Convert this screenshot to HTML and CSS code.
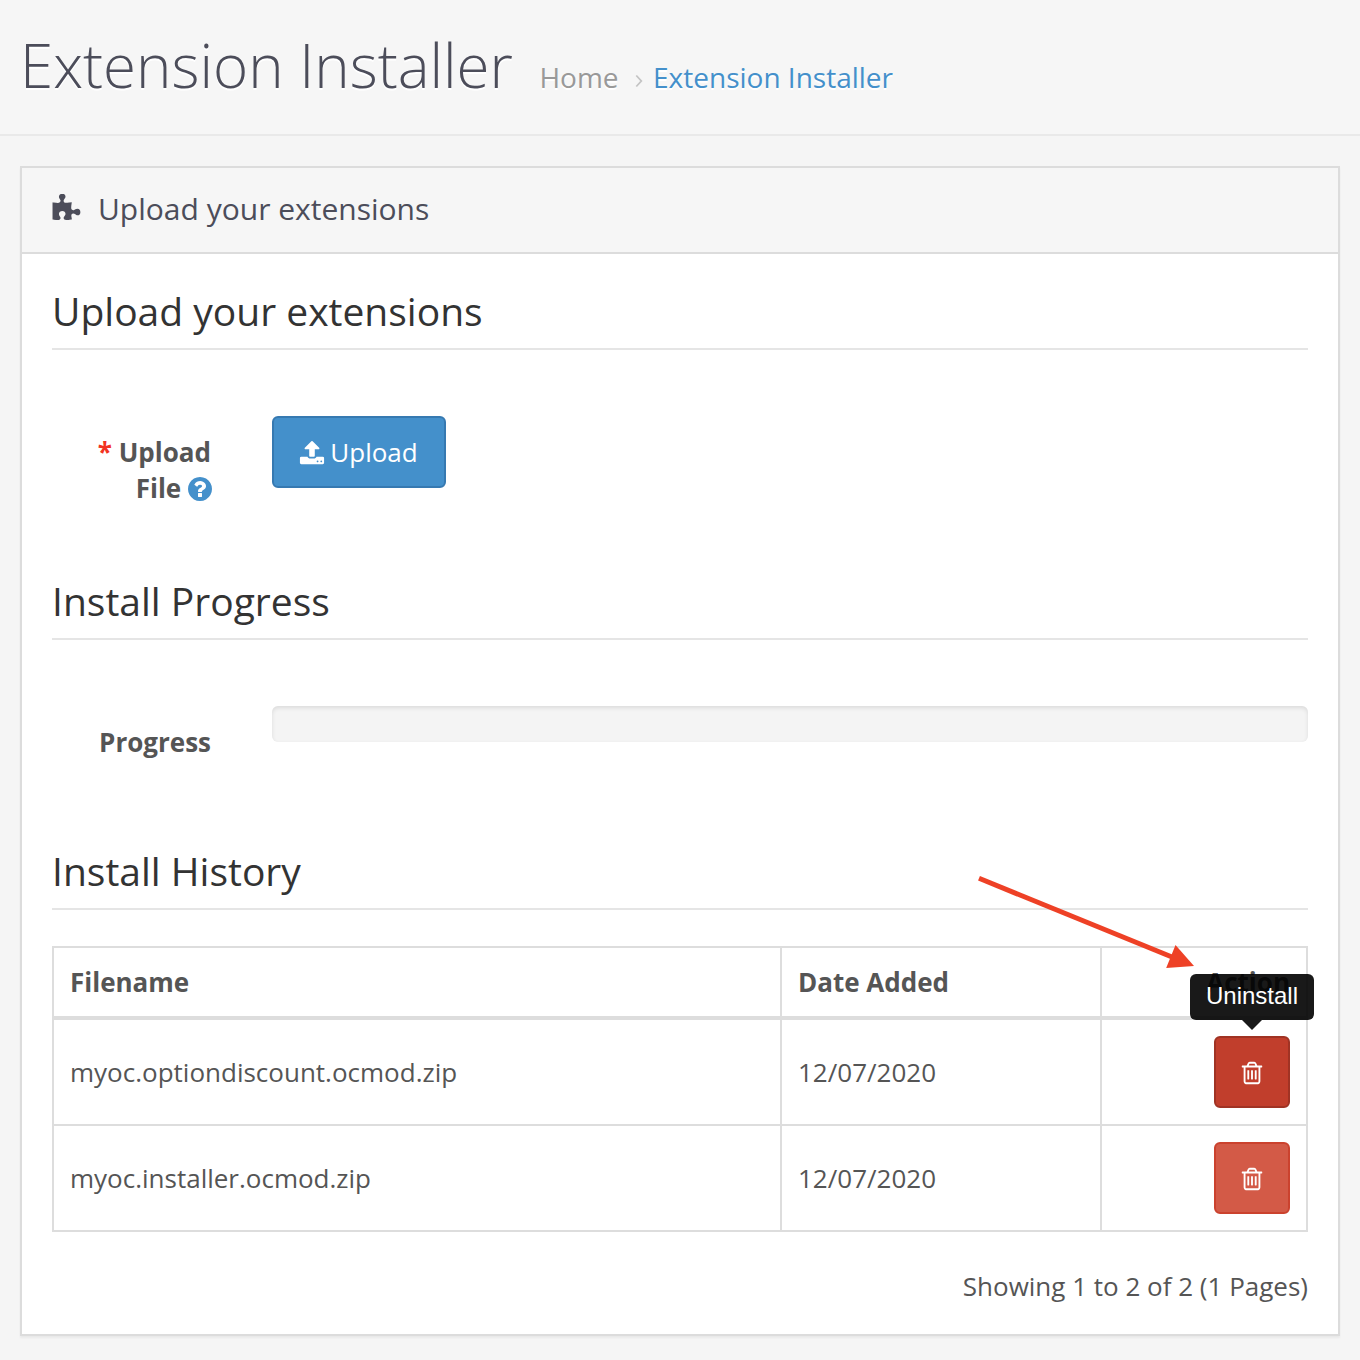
FILE: index.html
```html
<!DOCTYPE html>
<html lang="en">
<head>
<meta charset="utf-8">
<title>Extension Installer</title>
<link rel="stylesheet" href="styles.css">
</head>
<body>
<svg class="sprite" aria-hidden="true">
  <symbol id="trash" viewBox="0 0 1792 1792"><path d="M704 736v576q0 14-9 23t-23 9h-64q-14 0-23-9t-9-23v-576q0-14 9-23t23-9h64q14 0 23 9t9 23zm256 0v576q0 14-9 23t-23 9h-64q-14 0-23-9t-9-23v-576q0-14 9-23t23-9h64q14 0 23 9t9 23zm256 0v576q0 14-9 23t-23 9h-64q-14 0-23-9t-9-23v-576q0-14 9-23t23-9h64q14 0 23 9t9 23zm128 724v-948h-896v948q0 22 7 40.5t14.5 27 10.5 8.5h832q3 0 10.5-8.5t14.5-27 7-40.5zm-672-1076h448l-48-117q-7-9-17-11h-317q-10 2-17 11zm928 32v64q0 14-9 23t-23 9h-96v948q0 83-47 143.5t-113 60.5h-832q-66 0-113-58.5t-47-141.5v-952h-96q-14 0-23-9t-9-23v-64q0-14 9-23t23-9h309l70-167q15-37 54-63t79-26h320q40 0 79 26t54 63l70 167h309q14 0 23 9t9 23z"/></symbol>
</svg>
<header class="page-header">
  <h1>Extension Installer</h1>
  <nav class="breadcrumb">
    <a class="crumb" href="#">Home</a>
    <svg class="chevron" width="8" height="14" viewBox="0 0 8 14"><path d="M1.3 1.5 6.3 7l-5 5.500"/></svg>
    <a class="crumb current" href="#">Extension Installer</a>
  </nav>
</header>
<main class="panel">
  <div class="panel-heading">
    <svg class="puzzle" viewBox="0 0 1792 1792"><path d="M1755 1083q0 81-44.500 135t-123.500 54q-41 0-77.500-17.500t-59-38-56.500-38-71-17.500q-110 0-110 124 0 39 16 115t15 115v5q-22 0-33 1-34 3-97.500 11.500t-115.500 13.500-98 5q-61 0-103-26.500t-42-83.500q0-37 17.500-71t38-56.500 38-59 17.500-77.500q0-79-54-123.500t-135-44.500q-84 0-143 45.500t-59 127.500q0 43 15 83t33.500 64.500 33.500 53 15 50.500q0 45-46 89-37 35-117 35-95 0-245-24-9-2-27.500-4t-27.500-4l-13-2q-1 0-3-1-2 0-2-1v-1024q2 1 17.500 3.500t34 5 21.500 3.500q150 24 245 24 80 0 117-35 46-44 46-89 0-22-15-50.500t-33.500-53-33.500-64.500-15-83q0-82 59-127.500t144-45.500q80 0 134 44.500t54 123.500q0 41-17.500 77.500t-38 59-38 56.500-17.500 71q0 57 42 83.500t103 26.500q64 0 180-15t163-17v2q-1 2-3.500 17.500t-5 34-3.500 21.500q-24 150-24 245 0 80 35 117 44 46 89 46 22 0 50.500-15t53-33.500 64.500-33.500 83-15q82 0 127.500 59t45.500 143z"/></svg>
    <span>Upload your extensions</span>
  </div>
  <div class="panel-body">
    <section class="section upload">
      <h2>Upload your extensions</h2>
      <div class="form-row">
        <div class="label"><span class="star">*</span> Upload<br>File <svg class="help" viewBox="128 128 1536 1536"><path d="M1024 1376v-192q0-14-9-23t-23-9h-192q-14 0-23 9t-9 23v192q0 14 9 23t23 9h192q14 0 23-9t9-23zm256-672q0-88-55.500-163t-138.500-116-170-41q-243 0-371 213-15 24 8 42l132 100q7 6 19 6 16 0 25-12 53-68 86-92 34-24 86-24 48 0 85.500 26t37.500 59q0 38-20 61t-68 45q-63 28-115.500 86.500t-52.500 125.500v36q0 14 9 23t23 9h192q14 0 23-9t9-23q0-19 21.500-49.500t54.500-49.500q32-18 49-28.500t46-35 44.500-48 28-60.500 12.500-81zm384 192q0 209-103 385.500t-279.500 279.500-385.500 103-385.500-103-279.500-279.500-103-385.500 103-385.500 279.500-279.500 385.500-103 385.500 103 279.500 279.500 103 385.500z"/></svg></div>
        <button class="btn btn-primary" type="button">
          <svg class="upload-icon" viewBox="0 0 1792 1792"><path d="M1344 1472q0-26-19-45t-45-19-45 19-19 45 19 45 45 19 45-19 19-45zm256 0q0-26-19-45t-45-19-45 19-19 45 19 45 45 19 45-19 19-45zm128-224v320q0 40-28 68t-68 28h-1472q-40 0-68-28t-28-68v-320q0-40 28-68t68-28h427q21 56 70.500 92t110.500 36h256q61 0 110.500-36t70.500-92h427q40 0 68 28t28 68zm-325-648q-17 40-59 40h-256v448q0 26-19 45t-45 19h-256q-26 0-45-19t-19-45v-448h-256q-42 0-59-40-17-39 14-69l448-448q18-19 45-19t45 19l448 448q31 30 14 69z"/></svg>
          <span>Upload</span>
        </button>
      </div>
    </section>
    <section class="section install">
      <h2>Install Progress</h2>
      <div class="form-row">
        <div class="label">Progress</div>
        <div class="progress"></div>
      </div>
    </section>
    <section class="section">
      <h2>Install History</h2>
      <table class="history">
        <colgroup><col class="col-name"><col class="col-date"><col class="col-action"></colgroup>
        <thead><tr><th>Filename</th><th>Date Added</th><th class="action">Action</th></tr></thead>
        <tbody>
          <tr>
            <td>myoc.optiondiscount.ocmod.zip</td><td>12/07/2020</td>
            <td class="action"><div class="action-wrap">
              <button class="btn btn-danger hover" type="button"><svg class="trash-icon"><use href="#trash"/></svg></button>
              <div class="tooltip">Uninstall</div>
            </div></td>
          </tr>
          <tr>
            <td>myoc.installer.ocmod.zip</td><td>12/07/2020</td>
            <td class="action"><div class="action-wrap">
              <button class="btn btn-danger" type="button"><svg class="trash-icon"><use href="#trash"/></svg></button>
            </div></td>
          </tr>
        </tbody>
      </table>
      <p class="results">Showing 1 to 2 of 2 (1 Pages)</p>
    </section>
  </div>
</main>
<svg class="pointer" width="220" height="96" viewBox="976 874 220 96"><path class="shaft" d="M979 878.300 1172 957"/><path class="tip" d="M1194 966 1175.500 945 1166.200 968z"/></svg>
</body>
</html>
```
FILE: styles.css
```css
* { box-sizing: border-box; }
body {
  position: relative;
  margin: 0;
  min-height: 1360px;
  background: #f5f5f5;
  color: #555;
  font: 400 26px/36px "Open Sans", sans-serif;
}
.sprite { position: absolute; width: 0; height: 0; }
svg { fill: currentColor; }
h1, h2, p { margin: 0; }
a { text-decoration: none; }

.page-header {
  display: flex;
  align-items: baseline;
  height: 136px;
  padding: 32px 20px 0;
  border-bottom: 2px solid #e9e9e9;
  background: #f6f6f6;
  text-shadow: 0 2px #fff;
}
h1 {
  color: #4c4d5a;
  font-size: 60px;
  font-weight: 300;
  line-height: 66px;
}
.breadcrumb {
  display: flex;
  align-items: baseline;
  margin-left: 26.5px;
  font-size: 28px;
}
.crumb { color: #999; }
.crumb.current { color: #4490cb; }
.chevron {
  margin: 0 10px 0 16.5px;
  fill: none;
  stroke: #c4c4c4;
  stroke-width: 1.8;
}

.panel {
  margin: 30px 20px 24px;
  height: 1170px;
  border: 2px solid #dcdcdc;
  background: #fff;
  box-shadow: 0 2px 2px rgba(0, 0, 0, .05);
}
.panel-heading {
  display: flex;
  align-items: center;
  height: 86px;
  padding: 0 30px 2px 29px;
  border-bottom: 2px solid #dcdcdc;
  background: #f6f6f6;
  color: #4c4d5a;
  font-size: 30px;
}
.puzzle { width: 30px; height: 30px; margin: 0 17px 0 0; }
.panel-body { padding: 30px; }
h2 {
  height: 66px;
  border-bottom: 2px solid #e5e5e5;
  color: #333;
  font-size: 39px;
  font-weight: 400;
  line-height: 54px;
}
.upload { height: 290px; }
.install { height: 270px; }
.form-row { display: flex; align-items: flex-start; margin-top: 66px; }
.label {
  width: 159px;
  margin-right: 61px;
  padding-top: 18px;
  font-weight: 700;
  text-align: right;
}
.star { color: #f23322; }
.help {
  width: 24px;
  height: 24px;
  margin-right: -1px;
  color: #4490cb;
  vertical-align: -3px;
}

.btn {
  display: inline-flex;
  align-items: center;
  justify-content: center;
  height: 72px;
  padding: 0;
  border: 2px solid;
  border-radius: 6px;
  color: #fff;
  font: inherit;
}
.btn-primary { width: 174px; border-color: #3679b1; background: #4490cb; }
.upload-icon { width: 26px; height: 26px; margin: 1px 5px 0 -1px; }
.btn-danger { width: 76px; border-color: #cb422e; background: #d35a47; }
.btn-danger.hover { border-color: #a03324; background: #c13e2c; }
.trash-icon { width: 26px; height: 26px; margin: 1px 1px 0 0; }
.progress {
  flex: 1;
  height: 36px;
  border-radius: 6px;
  background: #f4f4f4;
  box-shadow: inset 0 2px 4px rgba(0, 0, 0, .1);
}

.history {
  width: 100%;
  margin-top: 36px;
  border: solid #ddd;
  border-width: 2px 0 0 2px;
  border-spacing: 0;
  table-layout: fixed;
}
.col-name { width: 728px; }
.col-date { width: 320px; }
th, td {
  height: 106px;
  padding: 0 16px;
  border: solid #ddd;
  border-width: 0 2px 2px 0;
  text-align: left;
}
th { height: 72px; border-bottom-width: 4px; }
.history .action { text-align: right; }
.action-wrap {
  position: relative;
  display: flex;
  justify-content: flex-end;
}
.tooltip {
  position: absolute;
  right: -24px;
  bottom: 88px;
  width: 124px;
  height: 46px;
  border-radius: 6px;
  background: rgba(0, 0, 0, .9);
  color: #fff;
  font: 24px/44px "Liberation Sans", sans-serif;
  text-align: center;
}
.tooltip::after {
  content: "";
  position: absolute;
  top: 100%;
  left: 52px;
  border: 10px solid transparent;
  border-top-color: rgba(0, 0, 0, .9);
  border-bottom: 0;
}
.results { margin-top: 36px; text-align: right; }

.pointer { position: absolute; left: 976px; top: 874px; }
.shaft { fill: none; stroke: #ee4126; stroke-width: 5; }
.tip { fill: #ee4126; }
```
